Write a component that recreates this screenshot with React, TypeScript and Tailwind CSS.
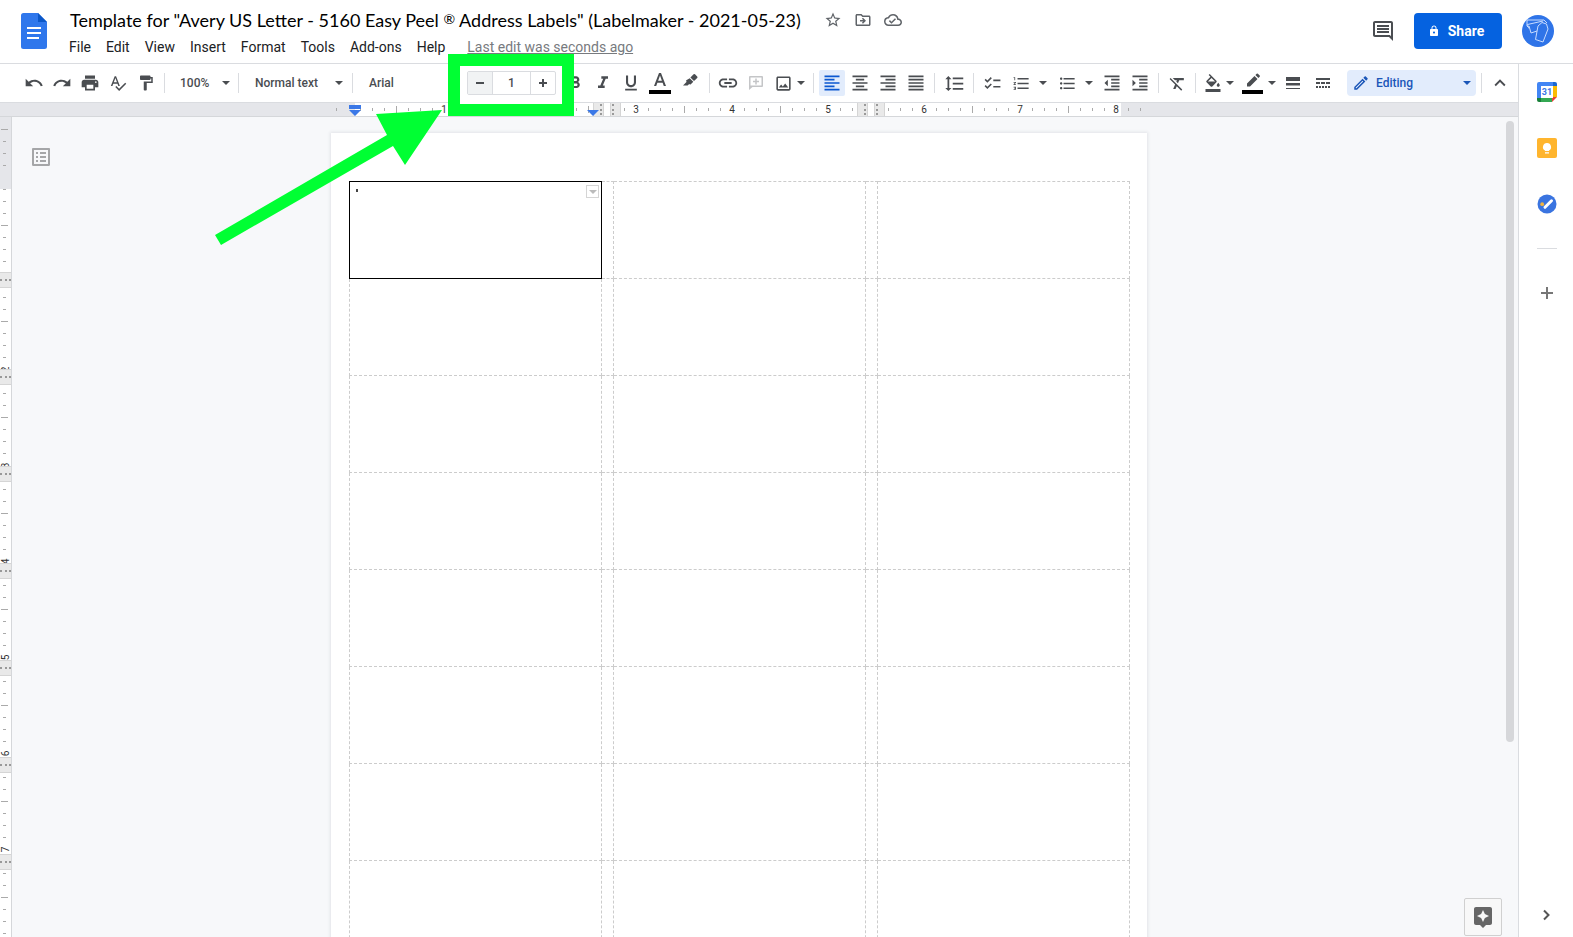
import React from "react";
import {
  MdUndo, MdRedo, MdPrint, MdSpellcheck, MdFormatPaint, MdFormatBold, MdFormatItalic,
  MdFormatUnderlined, MdLink, MdOutlineImage, MdFormatAlignLeft, MdFormatAlignCenter,
  MdFormatAlignRight, MdFormatAlignJustify, MdFormatLineSpacing, MdChecklist, MdFormatListNumbered,
  MdFormatListBulleted, MdFormatIndentDecrease, MdFormatIndentIncrease, MdFormatClear, MdFormatColorFill,
  MdOutlineEdit, MdExpandLess, MdStarBorder, MdOutlineDriveFileMove, MdOutlineCloudDone,
  MdOutlineComment, MdLock, MdAssistant, MdOutlineListAlt,
} from "react-icons/md";

const MENUS = ["File", "Edit", "View", "Insert", "Format", "Tools", "Add-ons", "Help"];

function Tool({ label, className = "w-7", children }: { label: string; className?: string; children: React.ReactNode }) {
  return (
    <button type="button" aria-label={label} className={`flex h-[26px] shrink-0 items-center justify-center rounded-xs ${className}`}>
      {children}
    </button>
  );
}

function Separator() {
  return <span className="mx-1 h-5 w-px shrink-0 bg-[#dadce0]" />;
}

function Caret() {
  return (
    <svg viewBox="0 0 8 4" className="h-1 w-2 shrink-0" fill="currentColor">
      <path d="M0 0h8L4 4z" />
    </svg>
  );
}

function PickList({ label, value, className, options }: { label: string; value: string; className: string; options: string[] }) {
  return (
    <label className={`flex h-[26px] shrink-0 items-center justify-between ${className}`}>
      <select aria-label={label} defaultValue={value} className="w-20 min-w-0 flex-1 appearance-none bg-transparent text-[12px] font-medium outline-none">
        {options.map((o) => (
          <option key={o}>{o}</option>
        ))}
      </select>
      <Caret />
    </label>
  );
}

function FontSize() {
  return (
    <div className="relative z-10 w-[89px] shrink-0">
      <div className="absolute -top-[17px] -right-[18px] -bottom-[21px] -left-[19px] border-12 border-[#00ff33] bg-white" />
      <div className="relative flex h-6 items-stretch rounded-xs border border-[#dadce0] bg-white">
        <button type="button" aria-label="Decrease font size" className="flex w-6 items-center justify-center bg-[#f1f3f4]">
          <svg viewBox="0 0 8 8" className="size-2" fill="currentColor"><path d="M0 3h8v2H0z" /></svg>
        </button>
        <input aria-label="Font size" defaultValue="1" className="w-10 min-w-0 flex-1 border-x border-[#dadce0] text-center text-[12px] font-medium outline-none" />
        <button type="button" aria-label="Increase font size" className="flex w-6 items-center justify-center">
          <svg viewBox="0 0 8 8" className="size-2" fill="currentColor"><path d="M3 0h2v3h3v2H5v3H3V5H0V3h3z" /></svg>
        </button>
      </div>
    </div>
  );
}

function Toolbar() {
  return (
    <div role="toolbar" className="relative z-20 flex h-[39px] items-center border-b border-[#dadce0] bg-white pr-1 pl-5 text-[#4a4d51]">
      <Tool label="Undo"><MdUndo size={20} /></Tool>
      <Tool label="Redo"><MdRedo size={20} /></Tool>
      <Tool label="Print"><MdPrint size={20} /></Tool>
      <Tool label="Spelling and grammar check"><MdSpellcheck size={18} /></Tool>
      <Tool label="Paint format"><MdFormatPaint size={18} /></Tool>
      <Separator />
      <PickList label="Zoom" value="100%" options={["50%", "100%", "200%"]} className="w-[65px] pr-1 pl-[11px]" />
      <Separator />
      <PickList label="Styles" value="Normal text" options={["Normal text", "Title", "Heading 1"]} className="w-[105px] pr-[5px] pl-3" />
      <Separator />
      <button type="button" className="h-[26px] w-[110px] shrink-0 pl-3 text-left text-[12px] font-medium">Arial</button>
      <FontSize />
      <Tool label="Bold" className="ml-[5px] w-7"><MdFormatBold size={20} /></Tool>
      <Tool label="Italic"><MdFormatItalic size={20} /></Tool>
      <Tool label="Underline"><MdFormatUnderlined size={20} /></Tool>
      <Tool label="Text color" className="w-[30px]">
        <svg viewBox="0 0 22 22" className="size-[22px]" fill="currentColor">
          <path d="M10 1h2l5 13h-2.2l-1.2-3.3H8.4L7.2 14H5zM9.1 8.8h3.8L11 3.4z" />
          <path d="M0 18h22v4H0z" fill="#000" />
        </svg>
      </Tool>
      <Tool label="Highlight color" className="w-[30px]">
        <svg viewBox="0 0 18 18" className="mb-1 size-[18px]" fill="currentColor">
          <path d="M12.6 2.3q.7-.7 1.4 0l2.2 2.2q.7.7 0 1.4L13 9.1 9.4 5.5zM8.7 6.2l3.6 3.6-2.5 2.5q-.6.6-1.2 0l-.4-.4L6.600 13.500H2l3.700-3.700-.4-.4q-.4-.6 0-1.100z" />
        </svg>
      </Tool>
      <Separator />
      <Tool label="Insert link"><MdLink size={22} /></Tool>
      <Tool label="Add comment" className="w-7 text-[#c4c5c7]">
        <svg viewBox="0 0 14 14" className="size-3.5" fill="currentColor">
          <path fillRule="evenodd" d="M1 0h12a1 1 0 0 1 1 1v9a1 1 0 0 1-1 1H3.500L0 14V1a1 1 0 0 1 1-1zM1.500 1.500v8h11v-8z" />
          <path d="M6.250 2.500h1.500v2.250H10v1.500H7.750V8.500h-1.500V6.250H4v-1.500h2.250z" />
        </svg>
      </Tool>
      <Tool label="Insert image" className="w-[39px] gap-1"><MdOutlineImage size={19} /><Caret /></Tool>
      <Separator />
      <Tool label="Align left" className="mx-px w-[26px] bg-[#e2ecfc] text-[#0b57d0]"><MdFormatAlignLeft size={20} /></Tool>
      <Tool label="Align center"><MdFormatAlignCenter size={20} /></Tool>
      <Tool label="Align right"><MdFormatAlignRight size={20} /></Tool>
      <Tool label="Justify"><MdFormatAlignJustify size={20} /></Tool>
      <Separator />
      <Tool label="Line spacing" className="w-[30px]"><MdFormatLineSpacing size={21} /></Tool>
      <Separator />
      <Tool label="Checklist"><MdChecklist size={19} /></Tool>
      <Tool label="Numbered list" className="w-[47px] gap-2"><MdFormatListNumbered size={19} /><Caret /></Tool>
      <Tool label="Bulleted list" className="w-[45px] gap-2"><MdFormatListBulleted size={19} /><Caret /></Tool>
      <Tool label="Decrease indent"><MdFormatIndentDecrease size={20} /></Tool>
      <Tool label="Increase indent"><MdFormatIndentIncrease size={20} /></Tool>
      <Separator />
      <Tool label="Clear formatting"><MdFormatClear size={19} /></Tool>
      <Separator />
      <Tool label="Fill color" className="w-[38px] gap-1">
        <MdFormatColorFill size={18} />
        <Caret />
      </Tool>
      <Tool label="Border color" className="w-[41px] gap-1">
        <svg viewBox="0 0 22 22" className="size-[22px]" fill="currentColor">
          <path d="M5 11.500 12.500 4l3 3L8 14.500H5zM13.400 3.100l1.300-1.300q.6-.5 1.200 0l1.800 1.800q.5.600 0 1.200L16.400 6.100z" />
          <path d="M0 18h21v4H0z" fill="#000" />
        </svg>
        <Caret />
      </Tool>
      <Tool label="Border width">
        <svg viewBox="0 0 14 12" className="h-3 w-3.5" fill="currentColor">
          <path d="M0 0h14v4H0zM0 6h14v2.500H0zM0 11h14v1H0z" />
        </svg>
      </Tool>
      <Tool label="Border dash" className="ml-0.5 w-7">
        <svg viewBox="0 0 14 10" className="h-2.5 w-3.5" fill="currentColor">
          <path d="M0 0h14v2H0zM0 4h4v2H0zM5 4h4v2H5zM10 4h4v2h-4zM0 8h2v2H0zM3 8h2v2H3zM6 8h2v2H6zM9 8h2v2H9zM12 8h2v2h-2z" />
        </svg>
      </Tool>
      <button type="button" className="mr-px ml-auto flex h-[26px] w-[129px] items-center gap-1.5 rounded bg-[#e2ecfc] px-[5px] text-[12px] font-medium text-[#1a56b8]">
        <MdOutlineEdit size={18} />
        <span className="flex-1 text-left">Editing</span>
        <Caret />
      </button>
      <Separator />
      <Tool label="Hide the menus"><MdExpandLess size={22} /></Tool>
    </div>
  );
}

function Header() {
  return (
    <header className="flex h-16 shrink-0 border-b border-[#dadce0] pr-[19px] pl-[21px]">
      <a href="#home" aria-label="Docs home" className="mt-[13px]">
        <svg viewBox="0 0 26 36" className="h-9 w-[26px]">
          <path d="M2.500 0H17l9 9v24.500a2.500 2.500 0 0 1-2.500 2.500h-21A2.500 2.500 0 0 1 0 33.500v-31A2.500 2.500 0 0 1 2.500 0z" fill="#2f77ec" />
          <path d="M17 0l9 9h-9z" fill="#0b57c8" />
          <path d="M6 14h14v2H6zM6 19h14v2H6zM6 24h12v2H6z" fill="#fff" />
        </svg>
      </a>
      <div className="ml-4 min-w-0 flex-1">
        <div className="flex h-10 items-center">
          <h1 className="px-[7px] text-[18px] leading-6 whitespace-nowrap text-black [font-family:Lato,sans-serif]">
            Template for "Avery US Letter - 5160 Easy Peel <span className="align-[3px] text-[14px] leading-none">®</span> Address Labels" (Labelmaker - 2021-05-23)
          </h1>
          <div className="ml-4 flex gap-3 text-[#5f6368]">
            <button type="button" aria-label="Star"><MdStarBorder size={18} /></button>
            <button type="button" aria-label="Move"><MdOutlineDriveFileMove size={18} /></button>
            <button type="button" aria-label="Document status"><MdOutlineCloudDone size={18} /></button>
          </div>
        </div>
        <nav className="flex h-[14px] items-center gap-[15px] px-1.5 text-[14px] whitespace-nowrap text-[#202124]">
          {MENUS.map((m) => (
            <button type="button" key={m}>{m}</button>
          ))}
          <a href="#history" className="ml-[7px] text-[#777a7e] underline">Last edit was seconds ago</a>
        </nav>
      </div>
      <div className="flex h-[62px] items-center">
        <button type="button" aria-label="Open comment history" className="text-[#4a4d51]"><MdOutlineComment size={24} /></button>
        <button type="button" className="ml-[19px] flex h-9 w-[88px] items-center justify-center gap-2 rounded bg-[#0562e0] pr-1 text-[14px] font-bold text-white">
          <MdLock size={12} />
          Share
        </button>
        <button type="button" aria-label="Account" className="ml-5">
          <svg viewBox="0 0 32 32" className="size-8" fill="none">
            <circle cx="16" cy="16" r="16" fill="#2f74e8" />
            <path d="M16 11l4-3.500 4.500 1.500 1.500 5-5 13-7.500-2.500zM5 5h17l3 3M5 5v6l1 1M5.500 9.500 21 6M7 11l2 7 6-2M5.500 9.500l1.500 4" stroke="#c9dcff" strokeWidth="1" strokeLinejoin="round" />
          </svg>
        </button>
      </div>
    </header>
  );
}

function ColumnHandle({ className }: { className: string }) {
  return (
    <span className={`absolute top-0 flex h-[13px] w-[11px] items-center border-x border-[#d5d5d5] bg-[#e9e9e9] ${className}`}>
      <span className="h-[11px] border-l-2 border-dotted border-[#999]" />
    </span>
  );
}

function HorizontalRuler() {
  return (
    <div className="relative z-10 flex h-3.5 shrink-0 justify-center overflow-hidden border-b border-[#d5d7da] bg-[#e5e6ea] pr-[42px] text-[10px] text-[#333]">
      <div className="relative flex w-[816px] shrink-0">
        <span className="absolute inset-y-0 right-[25px] left-[25px] bg-white" />
        {Array.from({ length: 68 }, (_, i) => {
          const major = i % 8 === 1;
          return (
            <span key={i} className="relative flex w-3 shrink-0 items-center justify-center">
              {major ? (i > 1 ? (i - 1) / 8 : null) : <span className={i % 8 === 5 ? "h-[7px] w-px bg-[#aaa]" : "h-[3px] w-px bg-[#aaa]"} />}
            </span>
          );
        })}
        <svg viewBox="0 0 12 11" className="absolute top-0.5 left-[19px] h-[11px] w-3" fill="#3b78e7">
          <path d="M0 0h12v4H0zM0 5h12l-6 6z" />
        </svg>
        <ColumnHandle className="left-[263px] justify-end pr-px" />
        <ColumnHandle className="left-[280px] justify-start pl-px" />
        <ColumnHandle className="left-[527px] justify-end pr-px" />
        <ColumnHandle className="left-[544px] justify-start pl-px" />
        <svg viewBox="0 0 12 6" className="absolute top-[7px] left-[257px] h-1.5 w-3" fill="#3b78e7">
          <path d="M0 0h12L6 6z" />
        </svg>
      </div>
    </div>
  );
}

function VerticalRuler() {
  return (
    <div className="relative w-3 shrink-0 overflow-hidden border-r border-[#d5d7da] bg-white text-[10px] text-[#333]">
      <div className="absolute inset-x-0 top-0 h-[72px] bg-[#e5e6ea]" />
      <div className="relative flex flex-col pt-1.5">
        {Array.from({ length: 68 }, (_, i) => {
          const major = i % 8 === 4;
          return (
            <span key={i} className="flex h-3 items-center pl-px">
              {major ? (
                i > 4 && <span className="block w-[9px] -rotate-90 text-center leading-[9px]">{(i - 4) / 8}</span>
              ) : (
                <span className={i % 8 === 0 ? "h-px w-[7px] bg-[#aaa]" : "ml-0.5 h-px w-[3px] bg-[#aaa]"} />
              )}
            </span>
          );
        })}
      </div>
      <div className="absolute inset-x-0 top-[155px] flex flex-col gap-[81px]">
        {Array.from({ length: 9 }, (_, i) => (
          <span key={i} className="flex h-4 items-center border-y border-[#d5d5d5] bg-[#e9e9e9]">
            <span className="w-full border-t-2 border-dotted border-[#999]" />
          </span>
        ))}
      </div>
    </div>
  );
}

function LabelSheet() {
  return (
    <main className="h-[1056px] w-[816px] shrink-0 bg-white pt-12 pl-[18px] shadow-[0_0_3px_1px_#e2e4e8]">
      <table className="w-[781px] table-fixed border-collapse">
        <colgroup>
          <col className="w-[252px]" />
          <col className="w-3" />
          <col className="w-[252px]" />
          <col className="w-3" />
          <col className="w-[252px]" />
        </colgroup>
        <tbody>
          {Array.from({ length: 10 }, (_, r) => (
            <tr key={r} className="h-[97px]">
              {Array.from({ length: 5 }, (_, c) =>
                r === 0 && c === 0 ? (
                  <td key={c} className="border border-black p-0 align-top">
                    <div className="flex items-start justify-between pt-[3px] pr-0.5 pl-1.5">
                      <span className="mt-1 h-[3px] w-0.5 bg-[#444]" />
                      <button type="button" aria-label="Cell options" className="flex size-[13px] items-center justify-center border border-[#d5d5d5] text-[#bbb]">
                        <Caret />
                      </button>
                    </div>
                  </td>
                ) : (
                  <td key={c} className="border border-dashed border-[#ccc] p-0" />
                ),
              )}
            </tr>
          ))}
        </tbody>
      </table>
    </main>
  );
}

function SidePanel() {
  return (
    <aside className="flex w-[55px] shrink-0 flex-col items-center border-l border-[#dadce0] bg-white pt-[18px] pb-3 pl-px">
      <button type="button" aria-label="Calendar">
        <svg viewBox="0 0 20 20" className="size-5">
          <path d="M2 0h16v4H4v12H0V2a2 2 0 0 1 2-2z" fill="#4285f4" />
          <path d="M16 0h2a2 2 0 0 1 2 2v2h-4z" fill="#1967d2" />
          <path d="M16 4h4v11h-4z" fill="#fbbc04" />
          <path d="M4 16h11v4H4z" fill="#34a853" />
          <path d="M0 16h4v4H2a2 2 0 0 1-2-2z" fill="#188038" />
          <path d="M16 15h4l-5 5v-4z" fill="#ea4335" />
          <path d="M4 4h12v12H4z" fill="#fff" />
          <text x="10" y="13" textAnchor="middle" fontSize="9" fontWeight="700" fill="#3b78e7" className="font-[Roboto]">31</text>
        </svg>
      </button>
      <button type="button" aria-label="Keep" className="mt-9">
        <svg viewBox="0 0 20 20" className="size-5">
          <rect width="20" height="20" rx="2" fill="#ffb52e" />
          <path d="M10 5a4 4 0 0 1 2 7.500V13H8v-.5A4 4 0 0 1 10 5zM8 14.200h4v1.300H8z" fill="#fff" />
        </svg>
      </button>
      <button type="button" aria-label="Tasks" className="mt-9">
        <svg viewBox="0 0 20 20" className="size-5">
          <circle cx="10" cy="10" r="9.500" fill="#3a74e0" />
          <path d="M8 13.300l6.500-6.500" stroke="#fff" strokeWidth="3" strokeLinecap="round" />
          <circle cx="5.200" cy="10.200" r="1.900" fill="#f0b440" />
        </svg>
      </button>
      <span className="mt-[34px] h-px w-5 bg-[#dadce0]" />
      <button type="button" aria-label="Get add-ons" className="mt-[34px] text-[#777]">
        <svg viewBox="0 0 12 12" className="m-1 size-3" fill="currentColor"><path d="M5 0h2v5h5v2H7v5H5V7H0V5h5z" /></svg>
      </button>
      <button type="button" aria-label="Hide side panel" className="mt-auto mr-0.5 text-[#555]">
        <svg viewBox="0 0 20 20" className="size-5" fill="none" stroke="currentColor" strokeWidth="2">
          <path d="M8 5.500 12.500 10 8 14.500" />
        </svg>
      </button>
    </aside>
  );
}

export default function App() {
  return (
    <div className="relative flex h-screen flex-col overflow-hidden bg-white [font-family:Roboto,sans-serif]">
      <Header />
      <div className="flex min-h-0 flex-1">
        <div className="flex min-w-0 flex-1 flex-col">
          <Toolbar />
          <HorizontalRuler />
          <div className="flex min-h-0 flex-1">
            <VerticalRuler />
            <div className="relative flex min-w-0 flex-1 justify-center overflow-hidden bg-[#f7f8fa] pt-4 pr-[52px]">
              <button type="button" aria-label="Show document outline" className="absolute top-7 left-[17px] text-[#a5a6a8]">
                <MdOutlineListAlt size={24} />
              </button>
              <LabelSheet />
              <span className="absolute top-1 right-1 h-[621px] w-2 rounded-full bg-[#d6d7da]" />
              <button type="button" aria-label="Explore" className="absolute right-4 bottom-px flex size-[38px] items-center justify-center rounded-xs border border-[#d0d0d0] bg-[#f8f8f8] text-[#666]">
                <MdAssistant size={24} />
              </button>
            </div>
          </div>
        </div>
        <SidePanel />
      </div>
      <svg viewBox="0 0 230 140" className="pointer-events-none absolute top-[108px] left-[213px] z-30 h-[140px] w-[230px]" fill="#00ff33">
        <path d="M229 2 163 6l11 21L2 127l6 10L180 38l12 19z" />
      </svg>
    </div>
  );
}
